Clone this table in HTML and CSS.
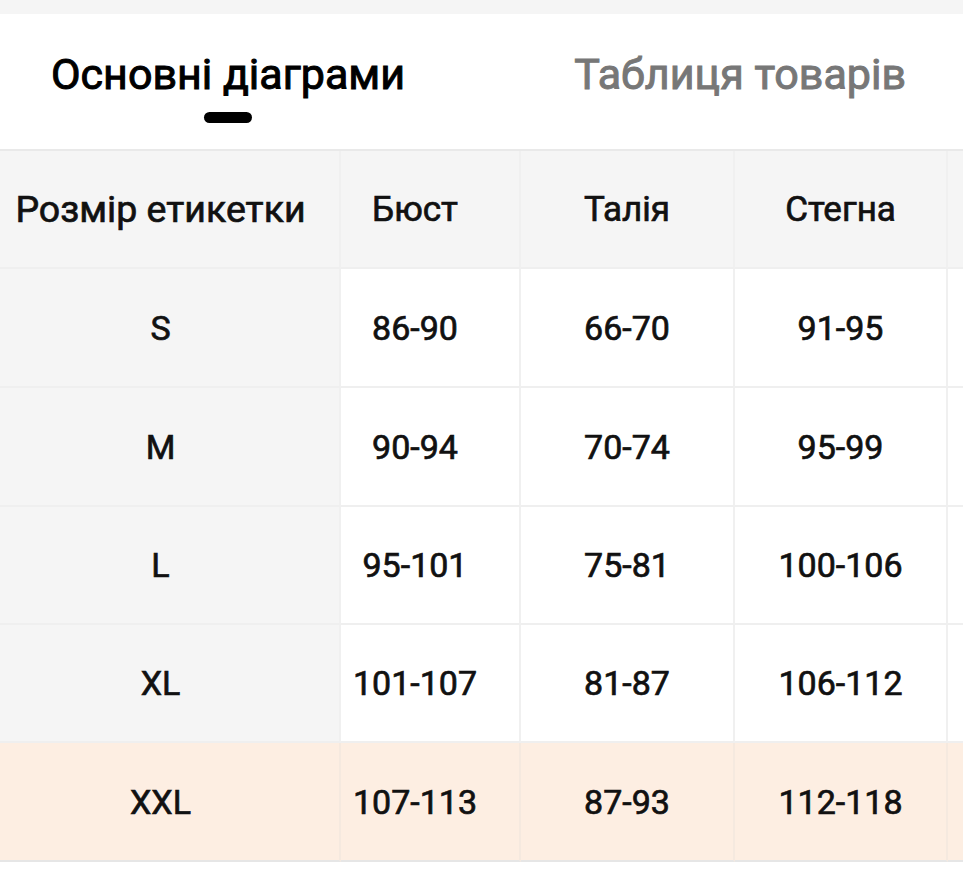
FILE: index.html
```html
<!DOCTYPE html>
<html lang="uk">
<head>
<meta charset="utf-8">
<title>Розмірна сітка</title>
<link rel="stylesheet" href="styles.css">
</head>
<body>
<div class="topband"></div>
<div class="tabs">
  <div class="tab tab-active">
    <span class="tab-label">Основні діаграми</span>
    <span class="tab-bar"></span>
  </div>
  <div class="tab">
    <span class="tab-label">Таблиця товарів</span>
  </div>
</div>
<div class="table">
  <div class="row row-head">
    <div class="cell c1">Розмір етикетки</div>
    <div class="cell c2">Бюст</div>
    <div class="cell c3">Талія</div>
    <div class="cell c4">Стегна</div>
    <div class="cell c5"></div>
  </div>
  <div class="row r1">
    <div class="cell c1">S</div>
    <div class="cell c2">86-90</div>
    <div class="cell c3">66-70</div>
    <div class="cell c4">91-95</div>
    <div class="cell c5"></div>
  </div>
  <div class="row r2">
    <div class="cell c1">M</div>
    <div class="cell c2">90-94</div>
    <div class="cell c3">70-74</div>
    <div class="cell c4">95-99</div>
    <div class="cell c5"></div>
  </div>
  <div class="row r3">
    <div class="cell c1">L</div>
    <div class="cell c2">95-101</div>
    <div class="cell c3">75-81</div>
    <div class="cell c4">100-106</div>
    <div class="cell c5"></div>
  </div>
  <div class="row r4">
    <div class="cell c1">XL</div>
    <div class="cell c2">101-107</div>
    <div class="cell c3">81-87</div>
    <div class="cell c4">106-112</div>
    <div class="cell c5"></div>
  </div>
  <div class="row r5 row-hl">
    <div class="cell c1">XXL</div>
    <div class="cell c2">107-113</div>
    <div class="cell c3">87-93</div>
    <div class="cell c4">112-118</div>
    <div class="cell c5"></div>
  </div>
</div>
</body>
</html>
```
FILE: styles.css
```css
html, body {
  margin: 0;
  padding: 0;
  background: #ffffff;
  font-family: Roboto, "Noto Sans", sans-serif;
  color: #111111;
  overflow: hidden;
}

.topband {
  height: 14px;
  background: #f5f5f5;
}

.tabs {
  display: flex;
  justify-content: space-between;
  padding: 39px 57px 0 51px;
  height: 137px;
  box-sizing: border-box;
  border-bottom: 2px solid #e9e9e9;
}

.tab {
  display: flex;
  flex-direction: column;
  align-items: center;
}

.tab-label {
  font-size: 43px;
  line-height: 43px;
  font-weight: 400;
  -webkit-text-stroke: 1px currentColor;
  color: #777777;
  white-space: nowrap;
}

.tab-active .tab-label {
  color: #000000;
}

.tab-bar {
  margin-top: 16px;
  width: 48px;
  height: 11px;
  border-radius: 6px;
  background: #000000;
}

.table {
  width: 963px;
  overflow: hidden;
}

.row {
  display: grid;
  grid-template-columns: 341px 180px 214px 213px 120px;
  width: 1068px;
}

.row-head { height: 118px; }
.r1 { height: 119px; }
.r2 { height: 119px; }
.r3 { height: 118px; }
.r4 { height: 118px; }
.r5 { height: 119px; }

.cell {
  display: flex;
  align-items: center;
  justify-content: center;
  box-sizing: border-box;
  border-right: 2px solid #f0f0f0;
  border-bottom: 2px solid #efefef;
  background: #ffffff;
  font-size: 34px;
  font-weight: 400;
  -webkit-text-stroke: 0.7px currentColor;
  white-space: nowrap;
}

.row-head .cell {
  background: #f5f5f5;
  font-size: 35px;
}

.c1 {
  background: #f5f5f5;
  padding-right: 18px;
}

.row-head .c1 {
  font-size: 37.5px;
}

.c2 {
  padding-right: 30px;
}

.row-hl .cell {
  background: #fdeee2;
  border-right-color: #f5e9df;
}

.r5 .cell {
  border-bottom-color: #e6e6e6;
}
```
